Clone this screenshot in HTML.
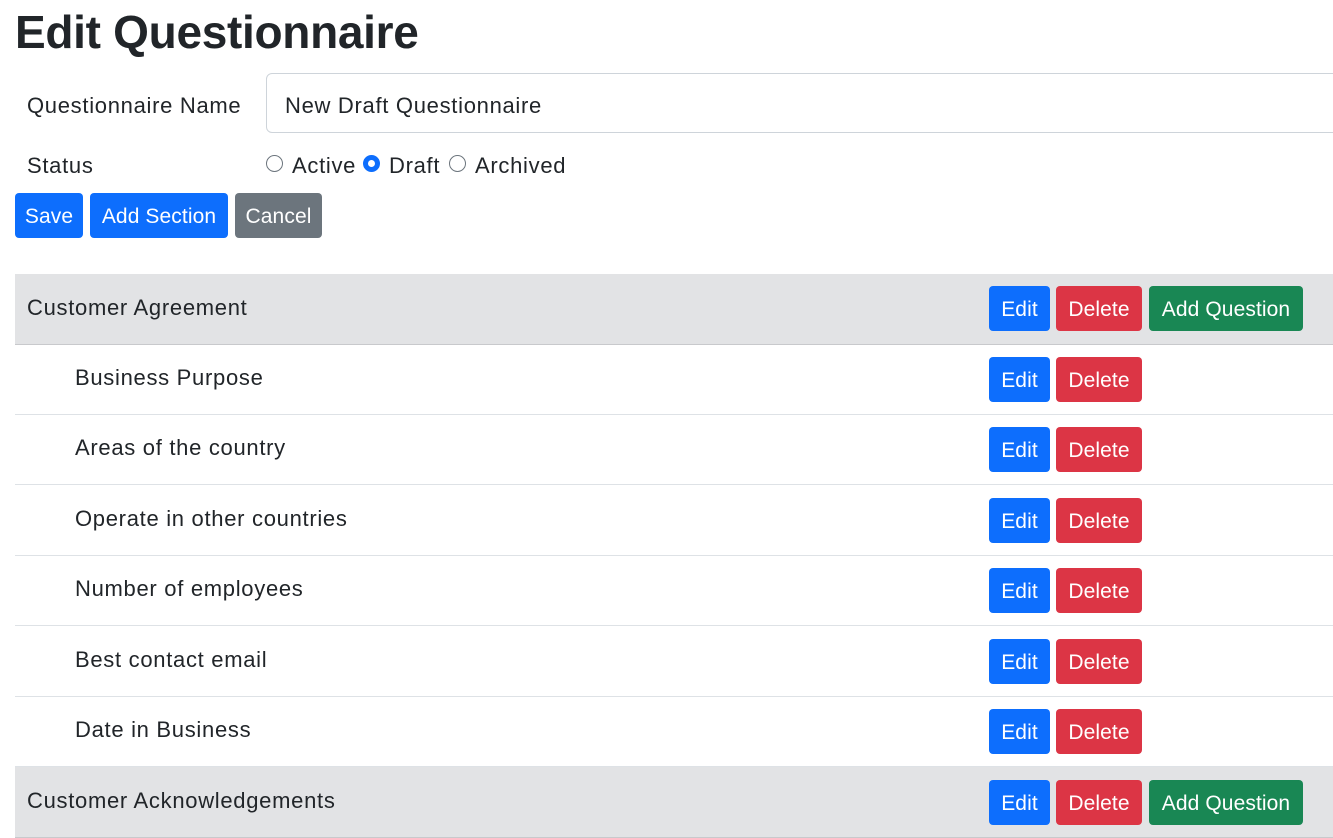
<!DOCTYPE html>
<html><head><style>
body{margin:0;width:1333px;height:819px;overflow:hidden;background:#fff;font-family:"Liberation Sans",sans-serif;color:#212529;position:relative}
.a{position:absolute;white-space:nowrap}
.t{font-size:22px;letter-spacing:0.7px}
h1{position:absolute;left:15px;top:5px;margin:0;font-size:46px;font-weight:bold;letter-spacing:-0.3px}
.btn{position:absolute;height:45px;line-height:47px;color:#fff;font-size:21px;text-align:center;border-radius:4px;letter-spacing:0.1px}
.p{background:#0d6efd}.d{background:#dc3545}.s{background:#198754}.g{background:#6c757d}
.row{position:absolute;left:15px;width:1318px;height:70px;border-bottom:1px solid #dee2e6}
.sec{background:#e2e3e5;border-bottom-color:#c8c9cc}
.lbl{position:absolute;top:21px;font-size:22px;letter-spacing:0.7px}
.radio{position:absolute;width:17px;height:17px;border:1px solid #6c757d;border-radius:50%;box-sizing:border-box}
</style></head><body>
<h1>Edit Questionnaire</h1>
<div class="a t" style="left:27px;top:93px">Questionnaire Name</div>
<div class="a" style="left:266px;top:73px;width:1080px;height:60px;border:1px solid #ced4da;border-radius:6px;box-sizing:border-box"></div>
<div class="a t" style="left:285px;top:93px">New Draft Questionnaire</div>
<div class="a t" style="left:27px;top:153px">Status</div>
<div class="radio" style="left:266px;top:155px"></div>
<div class="a t" style="left:292px;top:153px">Active</div>
<div class="radio" style="left:363px;top:155px;border:5px solid #0d6efd"></div>
<div class="a t" style="left:389px;top:153px">Draft</div>
<div class="radio" style="left:449px;top:155px"></div>
<div class="a t" style="left:475px;top:153px">Archived</div>
<div class="btn p" style="left:15px;top:193px;width:68px">Save</div>
<div class="btn p" style="left:90px;top:193px;width:138px">Add Section</div>
<div class="btn g" style="left:235px;top:193px;width:87px">Cancel</div>

<div class="row sec" style="top:274px"><div class="lbl" style="left:12px">Customer Agreement</div></div>
<div class="row" style="top:344px"><div class="lbl" style="left:60px">Business Purpose</div></div>
<div class="row" style="top:414px"><div class="lbl" style="left:60px">Areas of the country</div></div>
<div class="row" style="top:485px"><div class="lbl" style="left:60px">Operate in other countries</div></div>
<div class="row" style="top:555px"><div class="lbl" style="left:60px">Number of employees</div></div>
<div class="row" style="top:626px"><div class="lbl" style="left:60px">Best contact email</div></div>
<div class="row" style="top:696px"><div class="lbl" style="left:60px">Date in Business</div></div>
<div class="row sec" style="top:767px"><div class="lbl" style="left:12px">Customer Acknowledgements</div></div>

<div class="btn p" style="left:989px;top:286px;width:61px">Edit</div><div class="btn d" style="left:1056px;top:286px;width:86px">Delete</div><div class="btn s" style="left:1149px;top:286px;width:154px">Add Question</div>
<div class="btn p" style="left:989px;top:357px;width:61px">Edit</div><div class="btn d" style="left:1056px;top:357px;width:86px">Delete</div>
<div class="btn p" style="left:989px;top:427px;width:61px">Edit</div><div class="btn d" style="left:1056px;top:427px;width:86px">Delete</div>
<div class="btn p" style="left:989px;top:498px;width:61px">Edit</div><div class="btn d" style="left:1056px;top:498px;width:86px">Delete</div>
<div class="btn p" style="left:989px;top:568px;width:61px">Edit</div><div class="btn d" style="left:1056px;top:568px;width:86px">Delete</div>
<div class="btn p" style="left:989px;top:639px;width:61px">Edit</div><div class="btn d" style="left:1056px;top:639px;width:86px">Delete</div>
<div class="btn p" style="left:989px;top:709px;width:61px">Edit</div><div class="btn d" style="left:1056px;top:709px;width:86px">Delete</div>
<div class="btn p" style="left:989px;top:780px;width:61px">Edit</div><div class="btn d" style="left:1056px;top:780px;width:86px">Delete</div><div class="btn s" style="left:1149px;top:780px;width:154px">Add Question</div>
</body></html>
